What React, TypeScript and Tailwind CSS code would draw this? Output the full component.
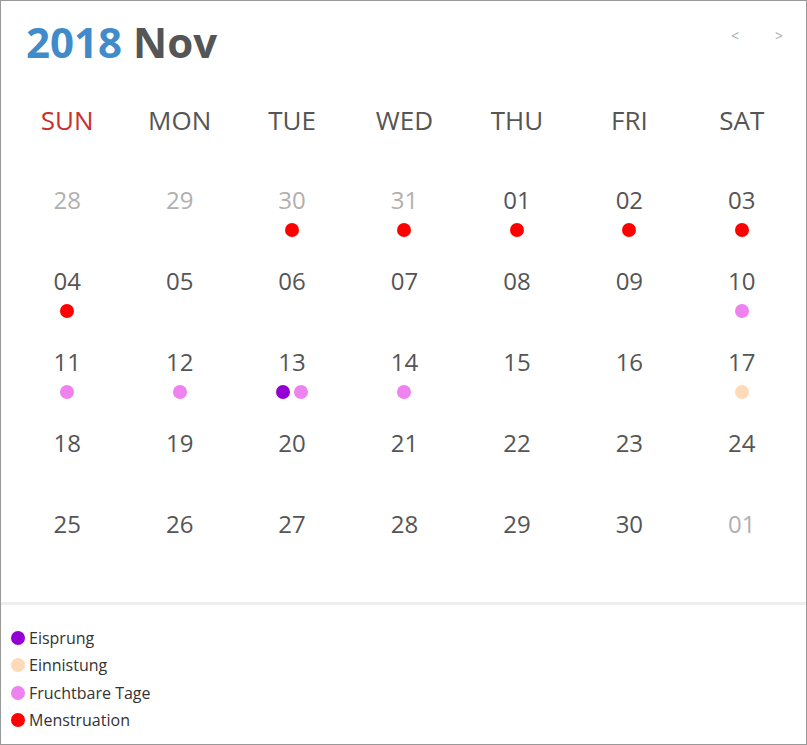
import React from "react";

type Day = { n: string; other?: boolean; dots: string[] };

const RED = "#ff0000";
const PURPLE = "#9400d3";
const PEACH = "#ffdab9";
const PINK = "#ee82ee";

const weeks: Day[][] = [
  [
    { n: "28", other: true, dots: [] },
    { n: "29", other: true, dots: [] },
    { n: "30", other: true, dots: [RED] },
    { n: "31", other: true, dots: [RED] },
    { n: "01", dots: [RED] },
    { n: "02", dots: [RED] },
    { n: "03", dots: [RED] },
  ],
  [
    { n: "04", dots: [RED] },
    { n: "05", dots: [] },
    { n: "06", dots: [] },
    { n: "07", dots: [] },
    { n: "08", dots: [] },
    { n: "09", dots: [] },
    { n: "10", dots: [PINK] },
  ],
  [
    { n: "11", dots: [PINK] },
    { n: "12", dots: [PINK] },
    { n: "13", dots: [PURPLE, PINK] },
    { n: "14", dots: [PINK] },
    { n: "15", dots: [] },
    { n: "16", dots: [] },
    { n: "17", dots: [PEACH] },
  ],
  [
    { n: "18", dots: [] },
    { n: "19", dots: [] },
    { n: "20", dots: [] },
    { n: "21", dots: [] },
    { n: "22", dots: [] },
    { n: "23", dots: [] },
    { n: "24", dots: [] },
  ],
  [
    { n: "25", dots: [] },
    { n: "26", dots: [] },
    { n: "27", dots: [] },
    { n: "28", dots: [] },
    { n: "29", dots: [] },
    { n: "30", dots: [] },
    { n: "01", other: true, dots: [] },
  ],
];

const weekdays = ["SUN", "MON", "TUE", "WED", "THU", "FRI", "SAT"];

const legend = [
  { c: PURPLE, t: "Eisprung" },
  { c: PEACH, t: "Einnistung" },
  { c: PINK, t: "Fruchtbare Tage" },
  { c: RED, t: "Menstruation" },
];

export default function App() {
  return (
    <div
      className="w-[807px] h-[745px] border border-[#999] bg-white flex flex-col overflow-hidden"
      style={{ fontFamily: '"Open Sans", "Noto Sans", sans-serif' }}
    >
      <div className="flex items-start justify-between pl-[25px] pr-[17px] pt-[17px]">
        <div className="text-[42px] leading-[48px] font-bold">
          <span className="text-[#428bca]">2018</span>{" "}
          <span className="text-[#555]">Nov</span>
        </div>
        <div className="flex gap-[24px] mt-[8px] text-[14px] leading-[20px] text-[#aaa]">
          <span className="w-[20px] text-center">&lt;</span>
          <span className="w-[20px] text-center">&gt;</span>
        </div>
      </div>

      <div className="pl-[10px] pr-[8px] mt-[20px]">
        <div className="grid grid-cols-7 h-[68px] items-center">
          {weekdays.map((w, i) => (
            <div
              key={w}
              className={`text-center text-[26px] leading-[32px] ${
                i === 0 ? "text-[#c9302c]" : "text-[#555]"
              }`}
            >
              {w}
            </div>
          ))}
        </div>
        <div className="h-[2px]" />
        {weeks.map((wk, wi) => (
          <div key={wi} className="grid grid-cols-7 h-[81px]">
            {wk.map((d, di) => (
              <div key={di} className="flex flex-col items-center pt-[28px]">
                <div
                  className={`text-[24px] leading-[32px] ${
                    d.other ? "text-[#b0b0b0]" : "text-[#555]"
                  }`}
                >
                  {d.n}
                </div>
                <div className="flex gap-[4px] mt-[7px] h-[14px]">
                  {d.dots.map((c, ci) => (
                    <span
                      key={ci}
                      className="w-[14px] h-[14px] rounded-full"
                      style={{ backgroundColor: c }}
                    />
                  ))}
                </div>
              </div>
            ))}
          </div>
        ))}
      </div>

      <div className="mt-[41px] border-t-[3px] border-[#eee] pl-[10px] pt-[19px]">
        {legend.map((l) => (
          <div key={l.t} className="flex items-center gap-[4px] h-[27.5px]">
            <span
              className="w-[14px] h-[14px] rounded-full"
              style={{ backgroundColor: l.c }}
            />
            <span className="text-[16px] text-[#333]">{l.t}</span>
          </div>
        ))}
      </div>
    </div>
  );
}
